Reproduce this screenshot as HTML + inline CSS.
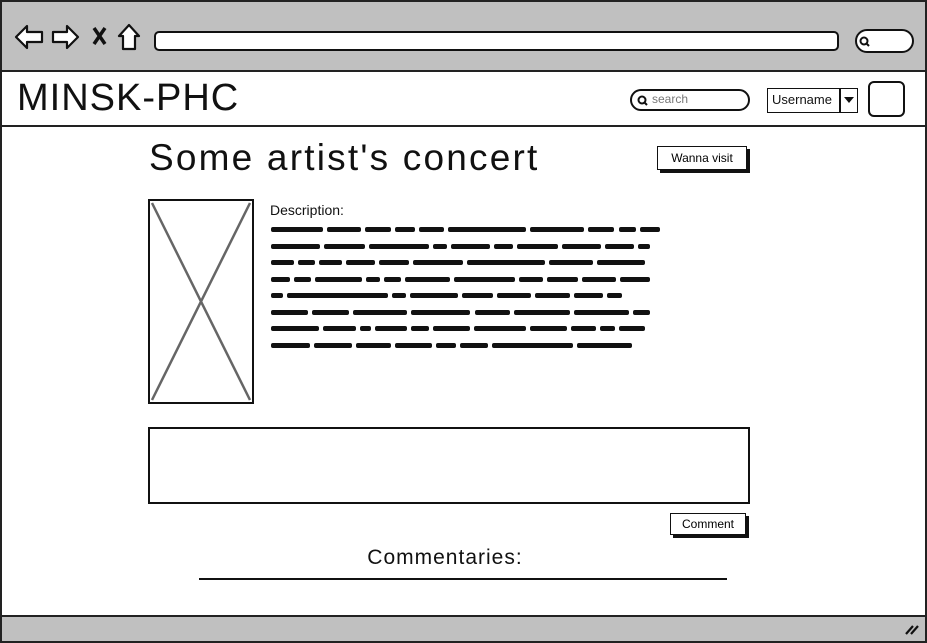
<!DOCTYPE html>
<html><head><meta charset="utf-8"><style>
*{margin:0;padding:0;box-sizing:border-box}
body{width:927px;height:643px;position:relative;overflow:hidden;background:#fff;font-family:"Liberation Sans",sans-serif}
.a{position:absolute}
.sq{position:absolute;height:5px;background:#111;border-radius:2px}
</style></head><body>
<div class="a" style="left:0;top:0;width:927px;height:643px;border:2px solid #222;background:#fff"></div>
<div class="a" style="left:2px;top:2px;width:923px;height:70px;background:#c0c0c0;border-bottom:2px solid #222"></div>
<svg class="a" style="left:12px;top:20px" width="135" height="34" viewBox="0 0 135 34" fill="#fff" stroke="#111" stroke-width="2.2" stroke-linejoin="round">
<path d="M4 17 L15 6 L15 12 L30 12 L30 22 L15 22 L15 28 Z"/>
<path d="M66 17 L55 6 L55 12 L41 12 L41 22 L55 22 L55 28 Z"/>
<path d="M82 8 L93 24 M93 8 L82 24" stroke-width="3.5"/>
<path d="M117 5 L107 16 L111 16 L111 29 L123 29 L123 16 L127 16 Z"/>
</svg>
<div class="a" style="left:154px;top:31px;width:685px;height:20px;background:#fff;border:2px solid #111;border-radius:5px"></div>
<div class="a" style="left:855px;top:29px;width:59px;height:24px;background:#fff;border:2px solid #111;border-radius:12px"></div>
<svg class="a" style="left:858px;top:35px" width="14" height="14"><circle cx="6" cy="6" r="3.5" fill="none" stroke="#111" stroke-width="2"/><path d="M8.5 8.5 L11 11" stroke="#111" stroke-width="2"/></svg>
<div class="a" style="left:2px;top:125px;width:923px;height:2px;background:#222"></div>
<div class="a" style="left:17px;top:77px;font-size:38px;color:#111;letter-spacing:1px">MINSK-PHC</div>
<div class="a" style="left:630px;top:89px;width:120px;height:22px;border:2px solid #111;border-radius:11px"></div>
<svg class="a" style="left:636px;top:94px" width="14" height="14"><circle cx="6" cy="6" r="3.5" fill="none" stroke="#111" stroke-width="2"/><path d="M8.5 8.5 L11 11" stroke="#111" stroke-width="2"/></svg>
<div class="a" style="left:652px;top:92px;font-size:12px;color:#777">search</div>
<div class="a" style="left:767px;top:88px;width:91px;height:25px;border:1.5px solid #111"></div>
<div class="a" style="left:839px;top:88px;width:1.5px;height:25px;background:#111"></div>
<div class="a" style="left:772px;top:92px;font-size:13px;color:#111">Username</div>
<div class="a" style="left:844px;top:97px;width:0;height:0;border-left:5px solid transparent;border-right:5px solid transparent;border-top:6px solid #111"></div>
<div class="a" style="left:868px;top:81px;width:37px;height:36px;border:2.5px solid #111;border-radius:6px"></div>
<div class="a" style="left:149px;top:137px;font-size:37px;color:#111;letter-spacing:2.2px;white-space:nowrap">Some artist's concert</div>
<div class="a" style="left:660px;top:149px;width:90px;height:24px;background:#111"></div>
<div class="a" style="left:657px;top:146px;width:90px;height:24px;background:#fff;border:1.5px solid #111;font-size:12px;text-align:center;line-height:22px">Wanna visit</div>
<div class="a" style="left:148px;top:199px;width:106px;height:205px;border:2px solid #111"></div>
<svg class="a" style="left:150px;top:201px" width="102" height="201"><path d="M2 2 L100 199 M100 2 L2 199" stroke="#666" stroke-width="2.5"/></svg>
<div class="a" style="left:270px;top:202px;font-size:14px;color:#111">Description:</div>
<div id="t"></div>
<div class="a" style="left:148px;top:427px;width:602px;height:77px;border:2px solid #111"></div>
<div class="a" style="left:673px;top:516px;width:76px;height:22px;background:#111"></div>
<div class="a" style="left:670px;top:513px;width:76px;height:22px;background:#fff;border:1.5px solid #111;font-size:12px;text-align:center;line-height:20px">Comment</div>
<div class="a" style="left:0;width:890px;top:546px;font-size:21px;color:#111;text-align:center;letter-spacing:1px">Commentaries:</div>
<div class="a" style="left:199px;top:578px;width:528px;height:1.5px;background:#111"></div>
<div class="a" style="left:2px;top:615px;width:923px;height:26px;background:#c0c0c0;border-top:2px solid #222"></div>
<svg class="a" style="left:904px;top:622px" width="16" height="14"><path d="M2 12 L9 4 M7 12 L14 4" stroke="#111" stroke-width="2.2"/></svg>
<script>
var L=[[58,38,30,22,28,88,60,30,20,22],[48,40,58,14,38,18,40,38,28,12],[22,16,22,28,28,48,74,42,46],[20,18,50,14,18,48,64,26,32,36,32],[12,106,14,50,32,36,36,30,16],[40,40,58,64,38,60,60,18],[52,36,12,34,20,40,56,40,28,16,28],[42,42,38,40,22,30,88,60]];
var E=[660,650,645,650,622,650,645,632];
var h='';L.forEach(function(r,i){var tot=0;r.forEach(function(w){tot+=w;});var g=4;var avail=E[i]-271-g*(r.length-1);var s=avail/tot;var x=271,y=227+i*16.5;r.forEach(function(w){var ww=w*s;h+='<div class="sq" style="left:'+x.toFixed(1)+'px;top:'+y+'px;width:'+ww.toFixed(1)+'px"></div>';x+=ww+g;});});
document.getElementById('t').innerHTML=h;
</script>
</body></html>
